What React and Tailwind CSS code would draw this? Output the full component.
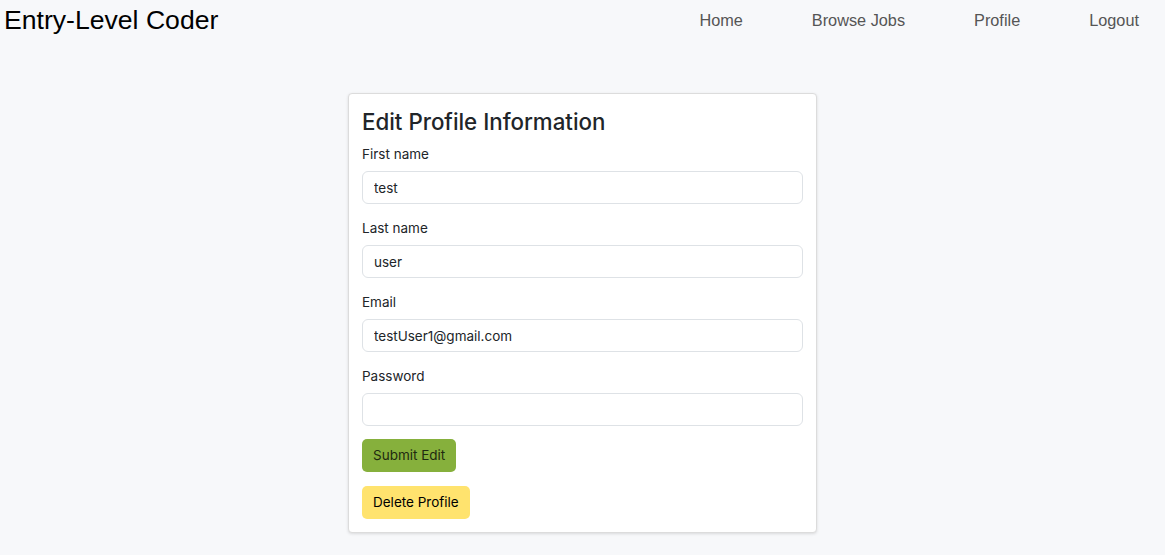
import React from 'react';

const Field = ({ label, value }) => (
  <div className="flex flex-col">
    <label className="text-[13.5px] leading-[20px] text-[#212529] mb-[7px]">{label}</label>
    <input
      defaultValue={value}
      className="h-[33px] w-full rounded-[6px] border border-[#dee2e6] bg-white px-[11px] text-[13.5px] text-[#212529] outline-none"
    />
  </div>
);

export default function App() {
  return (
    <div className="min-h-[555px] bg-[#f7f8fa]" style={{ fontFamily: 'Inter, "Noto Sans", sans-serif' }}>
      <nav className="flex items-center justify-between h-[41px]" style={{ fontFamily: '"Liberation Sans", Arial, sans-serif' }}>
        <span className="pl-[4px] text-[26.6px] text-black leading-none">Entry-Level Coder</span>
        <ul className="flex items-center gap-[69px] pr-[26px] text-[16.3px] text-[#555]">
          <li>Home</li>
          <li>Browse Jobs</li>
          <li>Profile</li>
          <li>Logout</li>
        </ul>
      </nav>
      <div className="flex justify-center pt-[52px] pb-[22px]">
        <form className="w-[469px] rounded-[4px] border border-[#dcdcdc] bg-white px-[13px] pt-[12px] pb-[13px] shadow-[0_1px_3px_rgba(0,0,0,0.12)]">
          <h2 className="text-[22.3px] leading-[32px] font-medium text-[#212529] mb-[6px]">Edit Profile Information</h2>
          <div className="flex flex-col gap-[14px]">
            <Field label="First name" value="test" />
            <Field label="Last name" value="user" />
            <Field label="Email" value="testUser1@gmail.com" />
            <Field label="Password" value="" />
          </div>
          <div className="flex flex-col items-start gap-[14px] mt-[13px]">
            <button type="button" className="h-[33px] rounded-[5px] bg-[#86b03c] px-[11px] text-[13.5px] text-[#1f2a10]">Submit Edit</button>
            <button type="button" className="h-[33px] rounded-[5px] bg-[#ffe36e] px-[11px] text-[13.5px] text-black">Delete Profile</button>
          </div>
        </form>
      </div>
    </div>
  );
}
